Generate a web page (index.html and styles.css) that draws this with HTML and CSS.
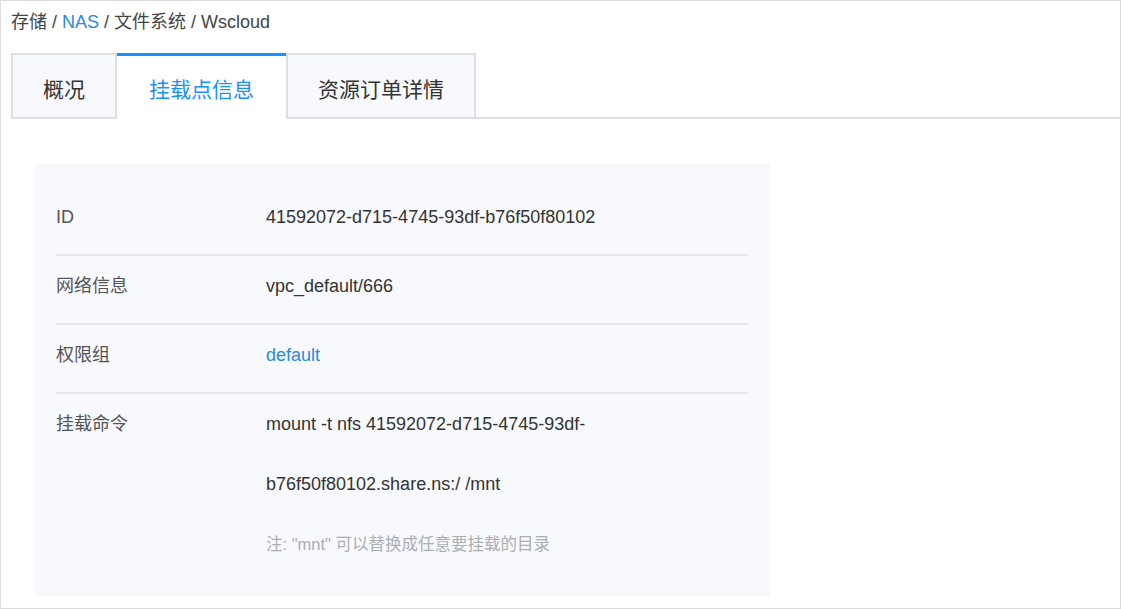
FILE: index.html
```html
<!DOCTYPE html>
<html lang="zh-CN">
<head>
<meta charset="utf-8">
<title>Wscloud</title>
<link rel="stylesheet" href="styles.css">
</head>
<body>
<div class="page">
  <div class="breadcrumb">
    <span>存储</span><span class="sep">/</span><a class="crumb-link">NAS</a><span class="sep">/</span><span>文件系统</span><span class="sep">/</span><span>Wscloud</span>
  </div>
  <div class="tabs">
    <div class="tab">概况</div>
    <div class="tab active">挂载点信息</div>
    <div class="tab">资源订单详情</div>
  </div>
  <div class="panel">
    <div class="row">
      <div class="label">ID</div>
      <div class="value">41592072-d715-4745-93df-b76f50f80102</div>
    </div>
    <div class="row">
      <div class="label">网络信息</div>
      <div class="value">vpc_default/666</div>
    </div>
    <div class="row">
      <div class="label">权限组</div>
      <div class="value"><a class="link">default</a></div>
    </div>
    <div class="row last">
      <div class="label">挂载命令</div>
      <div class="value">
        <div class="cmd">mount -t nfs 41592072-d715-4745-93df-</div>
        <div class="cmd">b76f50f80102.share.ns:/ /mnt</div>
        <div class="note">注: "mnt" 可以替换成任意要挂载的目录</div>
      </div>
    </div>
  </div>
</div>
</body>
</html>
```
FILE: styles.css
```css
* { box-sizing: border-box; }
html, body { margin: 0; padding: 0; background: #fff; }
body {
  font-family: "Liberation Sans", Arial, "Noto Sans CJK SC", sans-serif;
  font-size: 18px;
  color: #333;
}
.page {
  width: 1121px;
  height: 609px;
  border: 1px solid #dcdcdc;
  padding-left: 10px;
  overflow: hidden;
}
.breadcrumb {
  line-height: 42px;
  height: 42px;
  color: #444;
}
.breadcrumb .sep { margin: 0 5px; }
.crumb-link { color: #2b8ad8; }
.tabs {
  margin-top: 10px;
  display: flex;
  border-bottom: 2px solid #dedfe3;
  height: 66px;
}
.tab {
  height: 66px;
  display: flex;
  align-items: center;
  justify-content: center;
  padding: 3px 30px 0;
  border: 2px solid #dcdfe6;
  background: #f8f9fc;
  font-size: 21px;
  color: #333;
}
.tab + .tab { margin-left: -2px; }
.tab.active {
  background: #fff;
  border: none;
  border-top: 3px solid #1890ff;
  border-bottom: 2px solid #fff;
  padding: 2px 32px 0;
  color: #1890ff;
  margin-left: 0;
}
.tab.active + .tab { margin-left: 0; }
.panel {
  margin: 45px 0 0 23px;
  width: 736px;
  height: 432px;
  background: #f8f9fc;
  padding: 23px 22px 22px;
}
.row {
  display: flex;
  line-height: 60px;
  padding-bottom: 7px;
  border-bottom: 2px solid #e4e7ed;
}
.row.last { border-bottom: none; padding-bottom: 0; }
.label {
  width: 210px;
  flex: none;
  color: #555;
}
.value { color: #333; }
.link { color: #2b8ad8; }
.note {
  font-size: 16.5px;
  color: #aaadb3;
}
```
